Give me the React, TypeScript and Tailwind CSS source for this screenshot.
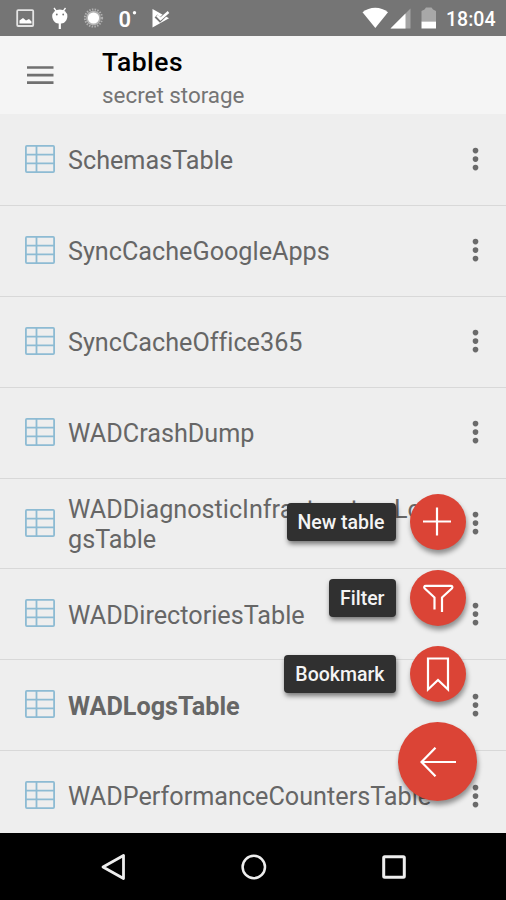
import clsx from "clsx";

type TableItem = {
  name: string;
  bold?: boolean;
};

const tables: TableItem[] = [
  { name: "SchemasTable" },
  { name: "SyncCacheGoogleApps" },
  { name: "SyncCacheOffice365" },
  { name: "WADCrashDump" },
  { name: "WADDiagnosticInfrastructureLogsTable" },
  { name: "WADDirectoriesTable" },
  { name: "WADLogsTable", bold: true },
  { name: "WADPerformanceCountersTable" },
];

const StatusBar = () => (
  <div className="flex h-[35.5px] shrink-0 items-center justify-between bg-[#757575] text-white">
    <div className="flex h-full items-center">
      <svg width="180" height="35" viewBox="0 0 180 35" fill="#fff">
        {/* picture */}
        <rect x="17.2" y="10.2" width="16" height="15.8" rx="1" fill="none" stroke="#e4e4e4" strokeWidth="1.8" />
        <path d="M19.5 23.5v-3l3.5-2.5 3 2.5 3-1.5 2.5 2.5v2z" />
        {/* android head */}
        <path d="M54 8l2.5 3.5M65.5 8l-2.500 3.500" stroke="#fff" strokeWidth="1.3" />
        <path d="M52.2 16a7.600 6.500 0 0 1 15.200 0c0 4-3 7.500-6 7.500h-3.200c-3 0-6-3.500-6-7.500z" />
        <path d="M59.800 23v6" stroke="#fff" strokeWidth="2.200" />
        <circle cx="56.800" cy="14.500" r="0.900" fill="#757575" />
        <circle cx="63.200" cy="14.500" r="0.900" fill="#757575" />
        {/* sun */}
        <circle cx="93.500" cy="18" r="8.600" fill="none" stroke="#b0b0b0" strokeWidth="2" strokeDasharray="1.500 1.260" />
        <circle cx="93.500" cy="18" r="7.300" fill="#b4b4b4" />
        <circle cx="93.500" cy="18" r="5.600" />
        <circle cx="134.500" cy="12.700" r="1.700" />
        {/* play store check */}
        <path d="M152.500 9l16.500 9.200-16.500 9.300z" />
        <path d="M156 16l4 4 8-8" fill="none" stroke="#757575" strokeWidth="4" />
        <path d="M157 15.500l3.500 3.500 8-7" fill="none" stroke="#fff" strokeWidth="2.400" />
        <text x="118.500" y="26.500" fontSize="22.500" fontWeight="600" textLength="12.500" lengthAdjust="spacingAndGlyphs">
          0
        </text>
      </svg>
    </div>
    <div className="flex h-full items-center">
      <svg width="80" height="35" viewBox="360 0 80 35" fill="#fff">
        <path d="M362.500 12.300a20 20 0 0 1 25.500 0L375.300 28z" />
        <path d="M390.500 28.500h20v-20z" fill="#a3a3a3" />
        <path d="M390.500 28.500h15V13.500z" />
        <path d="M424.500 9.500l1.500-2h5.500l1.500 2 3 1.500v10.500h-14.500V11z" fill="#a8a8a8" />
        <path d="M421.500 21.500H436v7h-14.500z" />
      </svg>
      <span className="ml-[6px] w-[60px] whitespace-nowrap pt-[3px] text-[19.500px] font-medium">18:04</span>
    </div>
  </div>
);

const Header = () => (
  <header className="flex h-[78.5px] shrink-0 items-start bg-[#f5f5f5]">
    <button className="mt-[29px] ml-[27px]">
      <svg width="27" height="20" viewBox="0 0 27 20" stroke="#707070" strokeWidth="2.600">
        <path d="M0 2.500h26.500M0 10.100h26.500M0 17.600h26.500" />
      </svg>
    </button>
    <div className="ml-[48px] pt-[11px]">
      <h1 className="text-[26.500px] leading-[30px] font-medium tracking-[0.500px] text-black">Tables</h1>
      <p className="mt-[4px] text-[22.400px] leading-[28px] text-[#747474]">secret storage</p>
    </div>
  </header>
);

const TableIcon = () => (
  <svg className="ml-[25px] mb-[2px] shrink-0" width="30" height="28" viewBox="0 0 30 28" fill="none" stroke="#8dbbd3" strokeWidth="1.800">
    <rect x="0.900" y="0.900" width="28.200" height="26.200" rx="1" />
    <path d="M11.500 1v26M1 9.700h28M1 18.300h28" />
  </svg>
);

const MoreIcon = () => (
  <svg className="mr-[27px] mb-px ml-auto shrink-0" width="7" height="24" viewBox="0 0 7 24" fill="#6a6a6a">
    <circle cx="3.500" cy="3.600" r="2.800" />
    <circle cx="3.500" cy="12.100" r="2.800" />
    <circle cx="3.500" cy="20.600" r="2.800" />
  </svg>
);

const TableRow = ({ name, bold }: TableItem) => (
  <li className="flex h-[90.900px] items-center border-b border-[#d8d8d8]">
    <TableIcon />
    <span
      className={clsx(
        "ml-[13px] w-[368px] break-all pt-[2px] text-[25.200px] leading-[29.500px] text-[#666] [font-variant-ligatures:none]",
        bold && "font-bold"
      )}
    >
      {name}
    </span>
    <MoreIcon />
  </li>
);

const PlusIcon = () => (
  <svg width="56" height="56" viewBox="0 0 56 56" fill="none" stroke="#fff" strokeWidth="2.200">
    <path d="M27 13.500v28M13 27.500h28" />
  </svg>
);

const FilterIcon = () => (
  <svg width="56" height="56" viewBox="0 0 56 56" fill="none" stroke="#fff" strokeWidth="2.200" strokeLinejoin="round">
    <path d="M24.500 39.500V27.500L14.800 18.500c-1.200-1.500-.5-2.700 1-2.700h25c1.500 0 2.200 1.200 1 2.700L32 27.500v14.500" />
  </svg>
);

const BookmarkIcon = () => (
  <svg width="56" height="56" viewBox="0 0 56 56" fill="none" stroke="#fff" strokeWidth="2.200">
    <path d="M18 12.500h20v31l-10-9.500-10 9.500z" />
  </svg>
);

const actions = [
  { label: "New table", icon: <PlusIcon /> },
  { label: "Filter", icon: <FilterIcon /> },
  { label: "Bookmark", icon: <BookmarkIcon /> },
];

const FloatingMenu = () => (
  <div className="absolute top-[494px] right-[29px] flex flex-col items-end gap-5">
    {actions.map((action) => (
      <div key={action.label} className="mr-[11px] flex items-center gap-[14.500px]">
        <span className="flex h-[37.500px] items-center rounded-[4px] bg-[#303030] px-[11px] pt-[2px] text-[19.500px] font-medium text-[#f4f4f4] shadow-[1px_3px_5px_rgba(0,0,0,0.5)]">
          {action.label}
        </span>
        <button className="size-14 rounded-full bg-[#db4436] shadow-[1px_4px_5px_rgba(0,0,0,0.4)]">
          {action.icon}
        </button>
      </div>
    ))}
    <button className="flex size-[79px] items-center justify-center rounded-full bg-[#db4436] shadow-[1px_4px_5px_rgba(0,0,0,0.4)]">
      <svg width="36" height="30" viewBox="0 0 36 30" fill="none" stroke="#fff" strokeWidth="2.200">
        <path d="M36 15H1.500M15.500.700L1.500 15l14 14.300" />
      </svg>
    </button>
  </div>
);

const NavBar = () => (
  <nav className="flex h-[67px] shrink-0 items-center bg-black pl-[101px]">
    <svg width="25" height="28" viewBox="0 0 25 28" fill="none" stroke="#eee" strokeWidth="2.800">
      <path d="M2 14L22.500 2.500v23z" strokeLinejoin="round" />
    </svg>
    <svg className="ml-[115px]" width="26" height="26" viewBox="0 0 26 26" fill="none" stroke="#eee" strokeWidth="2.500">
      <circle cx="12.800" cy="13" r="11.200" />
    </svg>
    <svg className="ml-[115px]" width="24" height="24" viewBox="0 0 24 24" fill="none" stroke="#eee" strokeWidth="3">
      <rect x="1.700" y="1.700" width="20.600" height="20.600" rx="1" />
    </svg>
  </nav>
);

const App = () => {
  return (
    <div className="relative flex h-[900px] w-[506px] flex-col overflow-hidden bg-[#eee] font-[Roboto,sans-serif]">
      <StatusBar />
      <Header />
      <ul className="min-h-0 flex-1 overflow-hidden bg-[#eee] pt-px">
        {tables.map((table) => (
          <TableRow key={table.name} {...table} />
        ))}
      </ul>
      <FloatingMenu />
      <NavBar />
    </div>
  );
};

export default App;
